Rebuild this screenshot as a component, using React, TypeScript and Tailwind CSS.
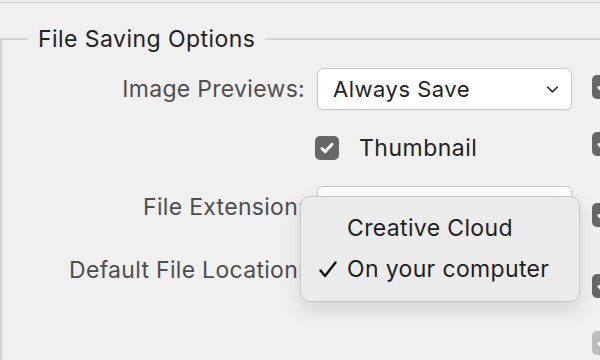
import { ChevronDown } from 'lucide-react';

const font = "font-['Inter','Noto_Sans',sans-serif]";

function Check({ className = '' }: { className?: string }) {
  return (
    <svg viewBox="0 0 24 24" className={className} fill="none">
      <path d="M6.5 12.5l3.5 3.5 7.5-8" stroke="white" strokeWidth="3.2" strokeLinecap="round" strokeLinejoin="round" />
    </svg>
  );
}

function Box({ disabled, className = '' }: { disabled?: boolean; className?: string }) {
  return (
    <div
      className={`flex size-[24px] shrink-0 items-center justify-center rounded-[5px] ${
        disabled ? 'bg-[#bcbcbc]' : 'bg-[#676767]'
      } ${className}`}
    >
      <Check className="size-[22px]" />
    </div>
  );
}

// closed popup button; the open one's value is hidden under the menu
function Select({ value }: { value?: string }) {
  return (
    <div className="flex h-[42px] w-[255px] items-center justify-between rounded-[6px] border border-[#c9c9c9] bg-white pr-[9px] pl-[15px] shadow-[0_1px_1px_rgba(0,0,0,0.05)]">
      <span className="text-[22px] tracking-[0.5px] text-[#1f1f1f]">{value}</span>
      <ChevronDown className="size-[19px] text-[#333]" strokeWidth={2} />
    </div>
  );
}

function Label({ children }: { children: React.ReactNode }) {
  return (
    <span className="w-[303px] shrink-0 text-right text-[23px] tracking-[0.3px] whitespace-nowrap text-[#4e4e4e]">
      {children}
    </span>
  );
}

export default function App() {
  return (
    <div className={`relative h-[360px] w-[600px] overflow-hidden bg-[#f0f0f0] ${font}`}>
      <div className="h-[3px] border-b border-[#cdcdcd]" />
      <fieldset className="mt-[22px] h-[400px] border-t-2 border-l-2 border-[#d3d3d3]">
        <legend className="ml-[26px] px-[10px] text-[23px] leading-[28px] tracking-[0.45px] text-[#222]">
          File Saving Options
        </legend>
        <div className="flex pt-[15px]">
          <div className="flex flex-col">
            <div className="flex h-[42px] items-center gap-[12px]">
              <Label>Image Previews:</Label>
              <Select value="Always Save" />
            </div>
            <div className="mt-[17px] flex h-[42px] items-center gap-[12px]">
              <span className="w-[301px] shrink-0" />
              <Box />
              <span className="ml-[8px] text-[23px] tracking-[0.5px] text-[#222]">Thumbnail</span>
            </div>
            <div className="mt-[17px] flex h-[42px] items-center gap-[12px]">
              <Label>File Extension:</Label>
              <Select />
            </div>
            <div className="mt-[21px] flex h-[42px] items-center gap-[12px]">
              <Label>Default File Location:</Label>
              <Select />
            </div>
          </div>
          <div className="ml-[20px] flex flex-col">
            <Box className="mt-[7px]" />
            <Box className="mt-[33px]" />
            <Box className="mt-[47px]" />
            <Box className="mt-[47px]" />
            <Box disabled className="mt-[33px]" />
          </div>
        </div>
      </fieldset>

      {/* open menu of the Default File Location popup */}
      <div className="absolute top-[196px] left-[300px] flex w-[280px] flex-col rounded-[10px] border border-[#c6c6c6] bg-[#ebebeb] py-[11px] shadow-[0_8px_20px_rgba(0,0,0,0.12)]">
        <div className="flex h-[41px] items-center pl-[46px] text-[23px] tracking-[0.35px] text-[#1e1e1e]">
          Creative Cloud
        </div>
        <div className="relative flex h-[41px] items-center pl-[46px] text-[23px] tracking-[0.35px] text-[#1e1e1e]">
          <svg viewBox="0 0 20 20" className="absolute top-[11px] left-[17px] size-[20px]" fill="none">
            <path d="M2.5 10.5l4.5 5.5L17.5 2.5" stroke="#111" strokeWidth="2.4" strokeLinecap="round" strokeLinejoin="round" />
          </svg>
          On your computer
        </div>
      </div>
    </div>
  );
}
